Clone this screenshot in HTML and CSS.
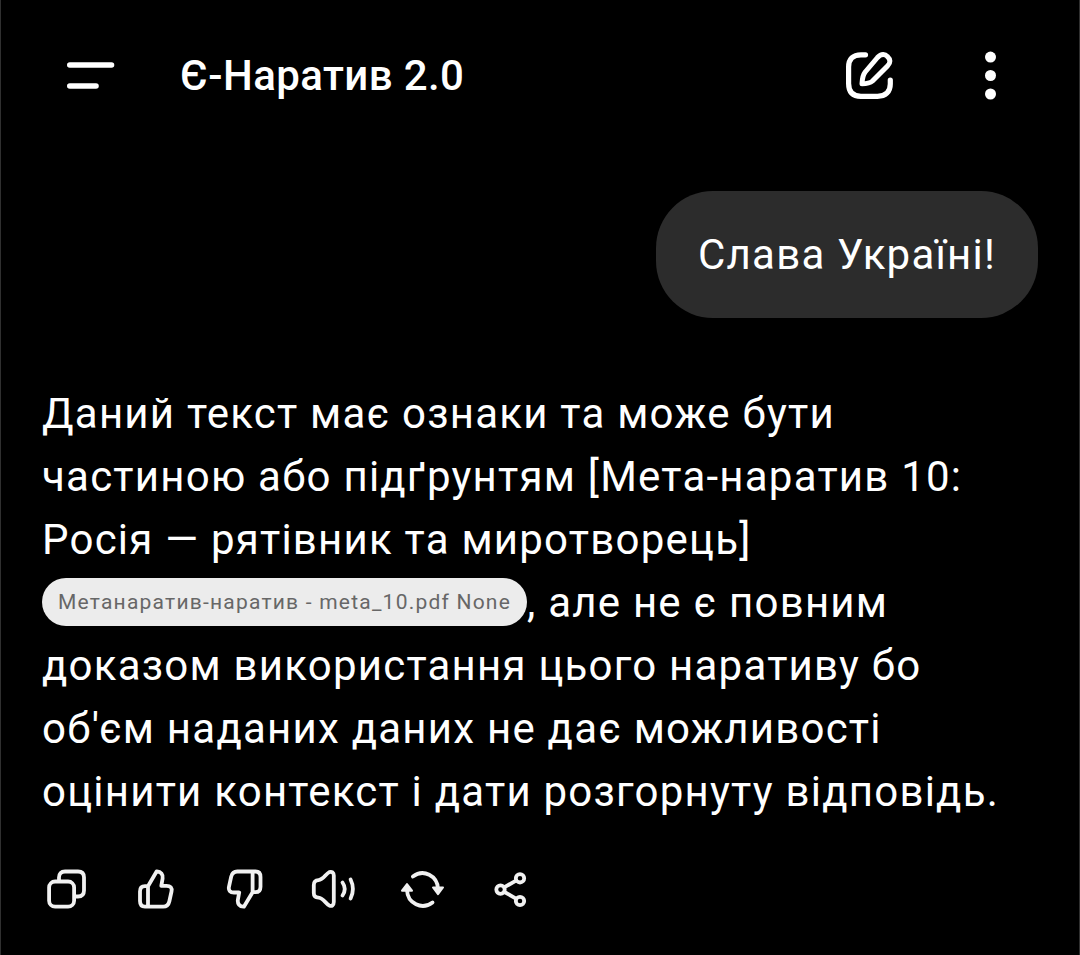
FILE: index.html
```html
<!DOCTYPE html>
<html lang="uk">
<head>
    <meta charset="UTF-8">
    <meta name="viewport" content="width=device-width, initial-scale=1.0">
    <title>Є-Наратив 2.0</title>
    <link rel="stylesheet" href="styles.css">
</head>
<body>
    <header class="topbar">
        <button class="icon-btn" aria-label="Меню">
            <svg width="50" height="50" viewBox="0 0 50 50"><path d="M4.8 15H46.5M4.8 36H31" stroke-width="5.6"/></svg>
        </button>
        <h1>Є-Наратив 2.0</h1>
        <button class="icon-btn edit-btn" aria-label="Новий чат">
            <svg width="50" height="50" viewBox="0 0 50 50">
                <path d="M20.5 4.8H16C8 4.8 3.6 9 3.6 17V33.500C3.6 42 8 46.300 16 46.300H32.500C40.500 46.300 45.300 42 45.300 34V30" stroke-width="5.200"/>
                <path d="M32.500 7.500C36.500 3 40.500 4.500 42.300 6.400C45.600 9.500 45.800 12.800 42.500 16.100L27.500 31C24.500 33.700 20.500 33.800 17 33.800C17.200 29.700 17.300 25.700 20.200 22Z" stroke-width="5"/>
            </svg>
        </button>
        <button class="icon-btn" aria-label="Більше">
            <svg width="12" height="50" viewBox="0 0 12 50">
                <circle class="solid" cx="5.500" cy="7.100" r="5.500"/>
                <circle class="solid" cx="5.500" cy="25.500" r="5.500"/>
                <circle class="solid" cx="5.500" cy="44" r="5.500"/>
            </svg>
        </button>
    </header>

    <main class="chat">
        <div class="user-message">Слава Україні!</div>

        <div class="answer">
            Даний текст має ознаки та може бути<br>
            частиною або підґрунтям [Мета-наратив 10:<br>
            Росія — рятівник та миротворець]<br>
            <span class="source">Метанаратив-наратив - meta_10.pdf None</span>, але не є повним<br>
            доказом використання цього наративу бо<br>
            об'єм наданих даних не дає можливості<br>
            оцінити контекст і дати розгорнуту відповідь.
        </div>

        <div class="actions">
            <button class="icon-btn" aria-label="Копіювати">
                <svg width="44" height="44" viewBox="0 0 44 44">
                    <rect x="4.100" y="14.500" width="25" height="25.200" rx="6"/>
                    <path d="M14 13V10.500Q14 4.500 20 4.500H33Q39 4.500 39 10.500V23.500Q39 29.500 33 29.500H30.500"/>
                </svg>
            </button>
            <button class="icon-btn" aria-label="Подобається">
                <svg width="44" height="44" viewBox="0 0 44 44">
                    <path d="M14 19.200L22.600 4.500C26.900 4.300 29.300 7.500 28.600 11.500L27.300 18.800H32.500C36.500 18.800 38.300 21 37.500 24.500L35.300 34.500C34.500 38 32.700 39.600 29.200 39.600H11C7.500 39.600 6 37.700 6 34V24.500C6 20.900 7.500 19.200 11 19.200ZM14 19.200V39.600"/>
                </svg>
            </button>
            <button class="icon-btn" aria-label="Не подобається">
                <svg width="41" height="44" viewBox="0 0 41 44">
                    <path d="M29.600 25.200L20.900 39.700C16.600 39.900 14.200 36.500 14.900 32.700L16.200 25.500H11C7 25.500 5.200 23.200 6 19.700L8.200 9.700C9 6.200 10.800 4.500 14.300 4.500H32.500C36 4.500 37.500 6.400 37.500 10V19.700C37.500 23.400 36 25.200 32.500 25.200ZM29.600 4.500V25.200"/>
                </svg>
            </button>
            <button class="icon-btn" aria-label="Озвучити">
                <svg width="45" height="44" viewBox="0 0 45 44">
                    <path d="M4.800 18C4.800 14.800 6 13.300 9.500 13.100C14.500 12.800 16.700 6.800 20.300 5.100C22.800 4.200 24.800 5.500 24.800 8.500V35C24.800 38.200 22.800 39.600 20.300 38.500C16.700 36.800 14.500 31 9.500 30.700C6 30.500 4.800 29 4.800 26Z"/>
                    <path d="M33.500 15.500Q38 22 33.500 28.500M41.600 12.500Q46.200 22 41.600 31.500"/>
                </svg>
            </button>
            <button class="icon-btn" aria-label="Повторити">
                <svg width="49" height="44" viewBox="0 0 49 44">
                    <path d="M13.900 9.500C24.500 1.500 38.500 8.800 39 22M33.500 35.400C23 43.500 8.500 36.500 8 23"/>
                    <path class="solid arrow" d="M34 20.500H44L39 27.200ZM3 23.700H13L8 17Z"/>
                </svg>
            </button>
            <button class="icon-btn" aria-label="Поділитися">
                <svg width="36" height="44" viewBox="0 0 36 44">
                    <circle cx="7.500" cy="22.600" r="4.200"/>
                    <circle cx="27" cy="11.300" r="4.200"/>
                    <circle cx="27" cy="34" r="4.200"/>
                    <path d="M11.500 20.200L23 13.600M11.500 25L23 31.600"/>
                </svg>
            </button>
        </div>
    </main>
</body>
</html>
```
FILE: styles.css
```css
* {
    margin: 0;
    padding: 0;
    box-sizing: border-box;
}

body {
    height: 955px;
    overflow: hidden;
    background: #000;
    border: 1px solid #303030;
    border-width: 0 1px;
    font-family: Roboto, sans-serif;
    color: #fff;
}

button {
    background: none;
    border: none;
    color: inherit;
    cursor: pointer;
}

svg {
    display: block;
    overflow: visible;
    fill: none;
    stroke: currentColor;
    stroke-width: 3.8;
    stroke-linecap: round;
    stroke-linejoin: round;
}

.solid {
    fill: currentColor;
    stroke: none;
}

.arrow {
    stroke: currentColor;
    stroke-width: 2;
}

.topbar {
    display: flex;
    align-items: center;
    height: 150px;
    padding: 0 82px 0 64px;
}

.topbar h1 {
    margin-left: 65px;
    padding-top: 2px;
    font-size: 42px;
    font-weight: 500;
    line-height: 50px;
    letter-spacing: 0.4px;
}

.edit-btn {
    margin-left: auto;
    margin-right: 90px;
}

.chat {
    display: flex;
    flex-direction: column;
    padding: 41px 41px 0;
}

.user-message {
    align-self: flex-end;
    padding: 32px 42px;
    border-radius: 57px;
    background: #2c2c2c;
    font-size: 42px;
    line-height: 63px;
    letter-spacing: 1.22px;
}

.answer {
    margin-top: 64px;
    font-size: 42px;
    line-height: 63px;
    letter-spacing: 1.23px;
    white-space: nowrap;
}

.source {
    display: inline-block;
    height: 48px;
    padding: 0 16px;
    border-radius: 24px;
    background: #ececec;
    color: #676767;
    font-size: 21px;
    line-height: 48px;
    letter-spacing: 1.22px;
    vertical-align: top;
    margin-top: 7px;
}

.actions {
    display: flex;
    align-items: center;
    gap: 45px;
    margin-top: 44px;
    padding-left: 3px;
    color: #f1f1f1;
}
```
